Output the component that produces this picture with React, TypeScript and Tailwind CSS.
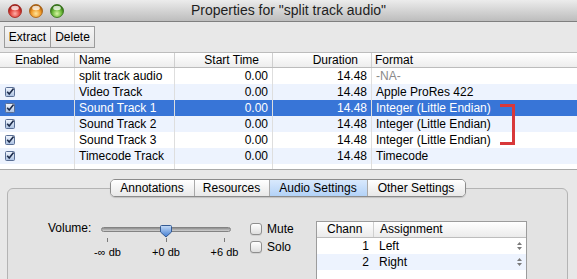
import React from 'react';

const rows = [
    { enabled: false, name: 'split track audio', start: '0.00', dur: '14.48', format: '-NA-', na: true },
    { enabled: true, name: 'Video Track', start: '0.00', dur: '14.48', format: 'Apple ProRes 422' },
    { enabled: true, name: 'Sound Track 1', start: '0.00', dur: '14.48', format: 'Integer (Little Endian)', selected: true },
    { enabled: true, name: 'Sound Track 2', start: '0.00', dur: '14.48', format: 'Integer (Little Endian)' },
    { enabled: true, name: 'Sound Track 3', start: '0.00', dur: '14.48', format: 'Integer (Little Endian)' },
    { enabled: true, name: 'Timecode Track', start: '0.00', dur: '14.48', format: 'Timecode' },
];

const cols = 'grid grid-cols-[75px_100px_98px_99px_1fr]';

function Light({ c1, c2, c3 }: { c1: string; c2: string; c3: string }) {
    const id = 'g' + c2.replace('#', '');
    return (
        <svg width="14" height="14" viewBox="0 0 14 14">
            <defs>
                <radialGradient id={id} cx="50%" cy="70%" r="60%">
                    <stop offset="0%" stopColor={c1} />
                    <stop offset="60%" stopColor={c2} />
                    <stop offset="100%" stopColor={c3} />
                </radialGradient>
            </defs>
            <circle cx="7" cy="7" r="6.5" fill={`url(#${id})`} stroke={c3} strokeWidth="0.8" />
            <ellipse cx="7" cy="4" rx="3.8" ry="2.2" fill="white" opacity="0.75" />
        </svg>
    );
}

function Check() {
    return (
        <svg width="10" height="10" viewBox="0 0 10 10">
            <defs>
                <linearGradient id="cb" x1="0" y1="0" x2="0" y2="1">
                    <stop offset="0%" stopColor="#f4f8ff" />
                    <stop offset="100%" stopColor="#a9bfe0" />
                </linearGradient>
            </defs>
            <rect x="0.5" y="0.5" width="9" height="9" rx="1" fill="url(#cb)" stroke="#5a6f95" />
            <path d="M2.2 4.8 L4.2 7 L8.6 1.6" fill="none" stroke="#1d2c4c" strokeWidth="1.6" />
        </svg>
    );
}

function Thumb() {
    return (
        <svg width="12" height="13" viewBox="0 0 12 13">
            <defs>
                <linearGradient id="th" x1="0" y1="0" x2="0" y2="1">
                    <stop offset="0%" stopColor="#c6dcf7" />
                    <stop offset="100%" stopColor="#3f7ad0" />
                </linearGradient>
            </defs>
            <path d="M1.5 0.5 H10.5 A1 1 0 0 1 11.5 1.5 V7 L6 12 L0.5 7 V1.5 A1 1 0 0 1 1.5 0.5 Z" fill="url(#th)" stroke="#345a93" />
        </svg>
    );
}

function Box({ label }: { label: string }) {
    return (
        <div className="flex items-center h-[14px] gap-[5px]">
            <div className="w-[12px] h-[12px] rounded-[3px] border border-[#8e8e8e] bg-linear-to-b from-white to-[#dedede] shadow-[0_1px_0_rgba(0,0,0,0.08)]" />
            <span className="text-[12px]">{label}</span>
        </div>
    );
}

function UpDown() {
    return (
        <svg width="5" height="8" viewBox="0 0 5 8" className="mr-[4px]">
            <path d="M2.5 0 L5 3 H0 Z M2.5 8 L5 5 H0 Z" fill="#7a7a7a" />
        </svg>
    );
}

export default function App() {
    return (
        <div className="w-[577px] h-[279px] overflow-hidden bg-[#e8e8e8] font-['Liberation_Sans',Arial,sans-serif] text-black select-none">
            {/* Title bar */}
            <div className="relative h-[22px] flex items-center border-b border-[#7f7f7f] bg-linear-to-b from-[#ececec] to-[#bdbdbd]">
                <div className="flex items-center gap-[7px] pl-[8px]">
                    <Light c1="#ffb0a8" c2="#e2453c" c3="#9e1d16" />
                    <Light c1="#ffe59a" c2="#f19c2a" c3="#a55a0b" />
                    <Light c1="#d8f6a2" c2="#6bb83a" c3="#2f6d12" />
                </div>
                <div className="absolute inset-0 flex items-center justify-center text-[14px] text-[#1e1e1e] pointer-events-none">
                    Properties for "split track audio"
                </div>
            </div>

            {/* Toolbar */}
            <div className="h-[30px] pt-[4px] pl-[4px]">
                <div className="flex h-[22px] border border-[#9b9b9b] w-fit bg-linear-to-b from-[#f6f6f6] to-[#e4e4e4] text-[12px]">
                    <div className="w-[46px] flex items-center justify-center border-r border-[#9b9b9b]">Extract</div>
                    <div className="w-[43px] flex items-center justify-center">Delete</div>
                </div>
            </div>

            {/* Table */}
            <div className="bg-white border-b border-[#a9a9a9]">
                <div className={`${cols} h-[16px] border-y border-[#bcbcbc] bg-linear-to-b from-white to-[#ededed] text-[12px] leading-[14px]`}>
                    <div className="text-center border-r border-[#cfcfcf]">Enabled</div>
                    <div className="pl-[4px] border-r border-[#cfcfcf]">Name</div>
                    <div className="text-right pr-[13px] border-r border-[#cfcfcf]">Start Time</div>
                    <div className="text-right pr-[13px] border-r border-[#cfcfcf]">Duration</div>
                    <div className="pl-[3px]">Format</div>
                </div>
                <div className="relative h-[101px]">
                    {rows.map((r, i) => (
                        <div
                            key={r.name}
                            className={`${cols} h-[16px] text-[12px] leading-[16px] ${
                                r.selected ? 'bg-[#3875d7] text-white' : i % 2 === 1 ? 'bg-[#edf3fe]' : 'bg-white'
                            }`}
                        >
                            <div className="flex items-center pl-[5px] border-r border-[#dedede]">{r.enabled && <Check />}</div>
                            <div className="pl-[4px] border-r border-[#dedede]">{r.name}</div>
                            <div className="text-right pr-[4px] border-r border-[#dedede]">{r.start}</div>
                            <div className="text-right pr-[4px] border-r border-[#dedede]">{r.dur}</div>
                            <div className={`pl-[4px] ${r.na ? 'text-[#8a8a8a]' : ''}`}>{r.format}</div>
                        </div>
                    ))}
                    <div className={`${cols} h-[5px]`}>
                        <div className="border-r border-[#dedede]" />
                        <div className="border-r border-[#dedede]" />
                        <div className="border-r border-[#dedede]" />
                        <div className="border-r border-[#dedede]" />
                        <div />
                    </div>
                    {/* red bracket annotation */}
                    <div className="absolute left-[500px] top-[36px] w-[15px] h-[41px] border-y-[3px] border-r-[3px] border-[#d8383a]" />
                </div>
            </div>

            {/* Settings panel */}
            <div className="pt-[9px] px-[7px] pr-[9px]">
                <div className="relative z-10 flex justify-center h-[18px]">
                    <div className="flex border border-[#8b8b8b] rounded-[5px] overflow-hidden text-[12px] shadow-[0_1px_1px_rgba(0,0,0,0.15)]">
                        <div className="w-[84px] flex items-center justify-center bg-linear-to-b from-white to-[#e8e8e8] border-r border-[#a9a9a9]">Annotations</div>
                        <div className="w-[75px] flex items-center justify-center bg-linear-to-b from-white to-[#e8e8e8] border-r border-[#a9a9a9]">Resources</div>
                        <div className="w-[98px] flex items-center justify-center bg-linear-to-b from-[#d9e9fd] to-[#b3d2f7] border-r border-[#a9a9a9]">Audio Settings</div>
                        <div className="w-[97px] flex items-center justify-center bg-linear-to-b from-white to-[#e8e8e8]">Other Settings</div>
                    </div>
                </div>
                <div className="-mt-[9px] h-[110px] rounded-[6px] border border-[#b4b4b4] bg-[#e3e3e3] pt-[32px] pl-[40px] flex items-start">
                    <div className="w-[53px] text-[12px] leading-[14px]">Volume:</div>
                    <div className="relative w-[130px]">
                        <div className="mt-[6px] h-[5px] rounded-full border border-[#838383] bg-linear-to-b from-[#8d8d8d] to-[#d2d2d2]" />
                        <div className="absolute left-[59px] top-[4px]">
                            <Thumb />
                        </div>
                        <div className="flex justify-between px-[6px] mt-[6px]">
                            {['-∞ db', '+0 db', '+6 db'].map((t) => (
                                <div key={t} className="w-[1px] flex flex-col items-center">
                                    <div className="w-[1px] h-[4px] bg-[#7a7a7a]" />
                                    <div className="mt-[4px] whitespace-nowrap text-[11px] leading-[12px]">{t}</div>
                                </div>
                            ))}
                        </div>
                    </div>
                    <div className="ml-[19px] w-[66px] mt-[1px] flex flex-col gap-[4px]">
                        <Box label="Mute" />
                        <Box label="Solo" />
                    </div>
                    <div className="w-[211px] h-[70px] border border-[#9c9c9c] bg-white text-[12px]">
                        <div className="grid grid-cols-[57px_1fr] h-[16px] leading-[15px] border-b border-[#bdbdbd] bg-linear-to-b from-white to-[#ebebeb]">
                            <div className="pl-[10px] border-r border-[#cfcfcf]">Chann</div>
                            <div className="pl-[6px]">Assignment</div>
                        </div>
                        {[
                            ['1', 'Left'],
                            ['2', 'Right'],
                        ].map(([n, a], i) => (
                            <div key={n} className={`grid grid-cols-[57px_1fr] h-[16px] leading-[16px] ${i === 1 ? 'bg-[#edf3fe]' : ''}`}>
                                <div className="text-right pr-[5px]">{n}</div>
                                <div className="flex items-center justify-between pl-[5px]">
                                    <span>{a}</span>
                                    <UpDown />
                                </div>
                            </div>
                        ))}
                    </div>
                </div>
            </div>
        </div>
    );
}
